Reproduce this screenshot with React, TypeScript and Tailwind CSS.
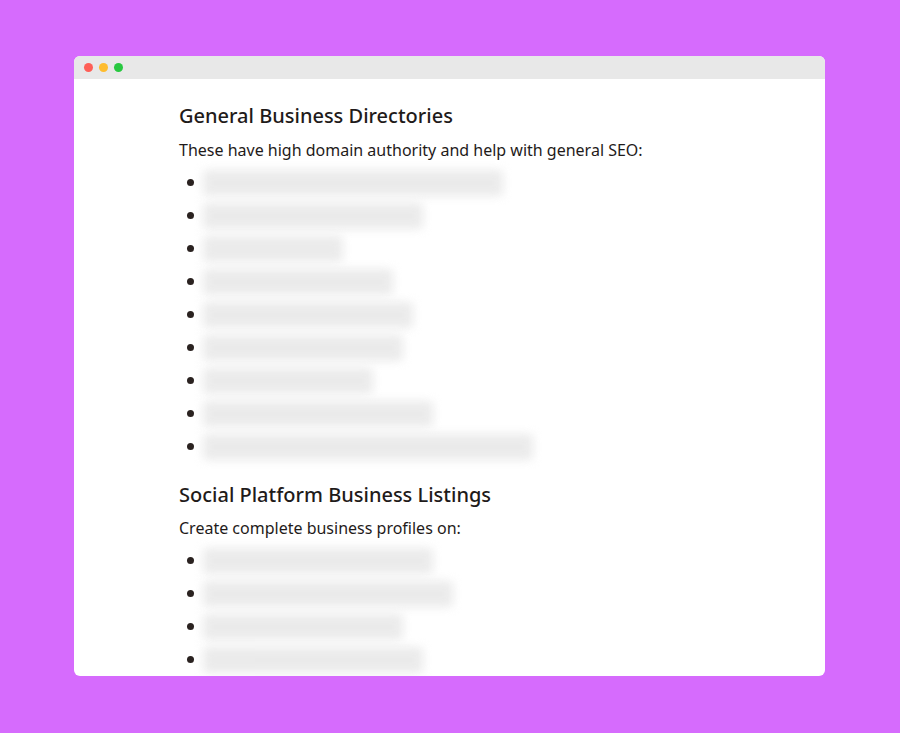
const list1 = [300, 220, 140, 190, 210, 200, 170, 230, 330];
const list2 = [230, 250, 200, 220];

function Blur({ w }: { w: number }) {
  return (
    <div className="h-[33px] flex items-center">
      <div className="h-[26px] bg-[#e6e6e6] rounded-sm blur-[5px] opacity-80" style={{ width: w }} />
    </div>
  );
}

function List({ items }: { items: number[] }) {
  return (
    <ul className="flex flex-col">
      {items.map((w, i) => (
        <li key={i} className="flex items-center h-[33px]">
          <span className="ml-[8px] w-[7px] h-[7px] rounded-full bg-[#2a2220]" />
          <span className="ml-[9px]"><Blur w={w} /></span>
        </li>
      ))}
    </ul>
  );
}

export default function App() {
  return (
    <div className="w-[900px] h-[733px] bg-[#d66bfd] pt-[56px] pl-[74px]" style={{ fontFamily: '"Noto Sans", sans-serif' }}>
      <div className="w-[751px] h-[620px] bg-white rounded-[6px] overflow-hidden flex flex-col">
        <div className="h-[24px] bg-[#e8e8e8] flex items-center gap-[6px] pl-[10px]">
          <span className="w-[9px] h-[9px] rounded-full bg-[#fe5f57]" />
          <span className="w-[9px] h-[9px] rounded-full bg-[#febc2e]" />
          <span className="w-[9px] h-[9px] rounded-full bg-[#28c840]" />
        </div>
        <div className="pl-[105px] pt-[22px] text-[#1f1b1a]">
          <h2 className="text-[20px] leading-[30px] font-medium">General Business Directories</h2>
          <p className="mt-[7px] text-[16px] leading-[24px]">These have high domain authority and help with general SEO:</p>
          <div className="mt-[4px]"><List items={list1} /></div>
          <h2 className="mt-[17px] text-[20px] leading-[30px] font-medium">Social Platform Business Listings</h2>
          <p className="mt-[6px] text-[16px] leading-[24px]">Create complete business profiles on:</p>
          <div className="mt-[4px]"><List items={list2} /></div>
        </div>
      </div>
    </div>
  );
}
